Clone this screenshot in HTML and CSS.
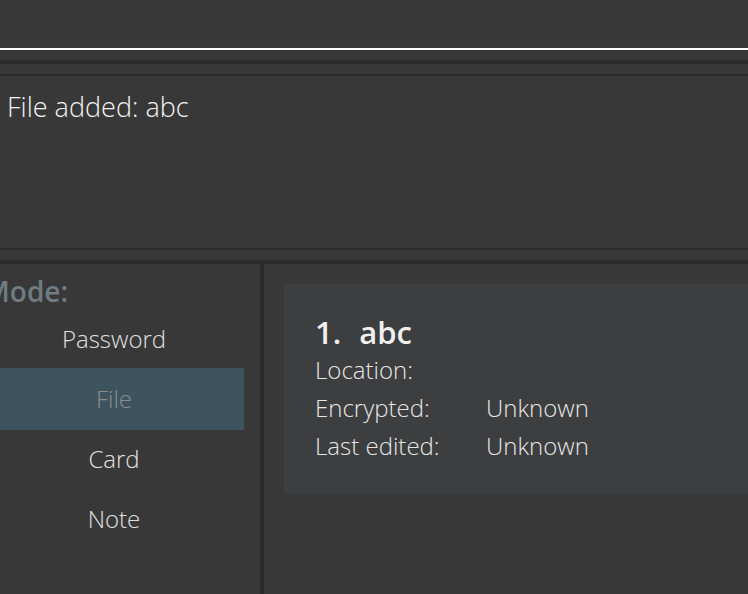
FILE: index.html
```html
<!DOCTYPE html>
<html>
<head>
<meta charset="utf-8">
<link rel="stylesheet" href="styles.css">
</head>
<body>
<div class="app">
  <div class="command">
    <div class="command-box"></div>
  </div>
  <div class="band thick"></div>
  <div class="result-wrap">
    <div class="result">File added: abc</div>
  </div>
  <div class="band thick"></div>
  <div class="main">
    <div class="sidebar">
      <div class="mode-title">Mode:</div>
      <ul class="modes">
        <li class="mode">Password</li>
        <li class="mode selected">File</li>
        <li class="mode">Card</li>
        <li class="mode">Note</li>
      </ul>
    </div>
    <div class="divider"></div>
    <div class="content">
      <div class="card">
        <div class="card-title"><span class="idx">1.</span><span class="name">abc</span></div>
        <div class="row"><span class="label">Location:</span><span class="value"></span></div>
        <div class="row"><span class="label">Encrypted:</span><span class="value">Unknown</span></div>
        <div class="row"><span class="label">Last edited:</span><span class="value">Unknown</span></div>
      </div>
    </div>
  </div>
</div>
</body>
</html>
```
FILE: styles.css
```css
html, body {
  margin: 0;
  padding: 0;
  background: #383838;
  overflow: hidden;
}
.app {
  width: 748px;
  height: 594px;
  display: flex;
  flex-direction: column;
  font-family: "Open Sans", "Noto Sans", sans-serif;
  color: #e6e6e6;
}
.command {
  height: 60px;
  flex: none;
}
.command-box {
  height: 48px;
  border-bottom: 2px solid #ffffff;
}
.band.thick {
  height: 4px;
  background: #2b2b2b;
  flex: none;
}
.result-wrap {
  padding: 10px 0;
  flex: none;
}
.result {
  border-top: 2px solid #2b2b2b;
  border-bottom: 2px solid #2b2b2b;
  height: 176px;
  box-sizing: border-box;
  padding: 13px 7px;
  font-size: 27px;
  font-weight: 300;
  line-height: 36px;
  color: #f2f2f2;
}
.main {
  flex: 1;
  display: flex;
}
.sidebar {
  width: 276px;
  margin-left: -16px;
  flex: none;
  padding-top: 10px;
  box-sizing: border-box;
}
.mode-title {
  font-size: 28px;
  font-weight: 600;
  color: #6f7c83;
  line-height: 35px;
}
.modes {
  list-style: none;
  margin: 0;
  padding: 0;
  width: 260px;
}
.mode {
  height: 60px;
  line-height: 60px;
  text-align: center;
  font-size: 24px;
  font-weight: 300;
  color: #e0e0e0;
}
.mode.selected {
  background: #3d545e;
  color: #8c8c8c;
  height: 62px;
  line-height: 62px;
  margin: -1px 0;
}
.divider {
  width: 4px;
  background: #2b2b2b;
  flex: none;
}
.content {
  flex: 1;
  padding: 20px 0 0 20px;
}
.card {
  background: #3d3e40;
  height: 210px;
  box-sizing: border-box;
  padding: 29px 31px;
  margin-right: -20px;
}
.card-title {
  font-size: 31px;
  font-weight: 600;
  color: #f0f0f0;
  line-height: 38px;
  display: flex;
  gap: 18px;
}
.row {
  display: flex;
  font-size: 24px;
  font-weight: 300;
  line-height: 38px;
  color: #e6e6e6;
}
.label {
  width: 171px;
  flex: none;
}
```
